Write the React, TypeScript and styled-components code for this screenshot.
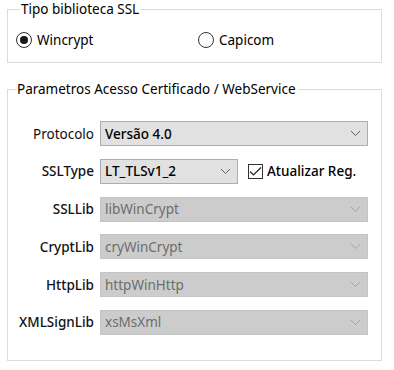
import React from "react";
import styled, { createGlobalStyle } from "styled-components";

const Global = createGlobalStyle`
  html, body { margin: 0; padding: 0; background: #ffffff; }
  body { font-family: "Segoe UI", "Noto Sans", "Open Sans", sans-serif; font-size: 14px; color: #000; }
`;

const Page = styled.div`
  width: 394px;
  height: 370px;
  box-sizing: border-box;
  padding: 1px 12px 0 7px;
  display: flex;
  flex-direction: column;
  gap: 18px;
`;

const Group = styled.fieldset<{ $h: number; $pt: number; $lm: number }>`
  margin: 0;
  box-sizing: border-box;
  height: ${(p) => p.$h}px;
  border: 1px solid #dcdcdc;
  padding: ${(p) => p.$pt}px 0 0 0;
  min-width: 0;
  & > legend {
    margin-left: ${(p) => p.$lm}px;
  }
`;

const Legend = styled.legend`
  padding: 0 2px 0 1px;
  font-size: 13.5px;
  line-height: 16px;
  color: #000;
`;

const RadioRow = styled.div`
  display: flex;
  align-items: center;
  padding-left: 8px;
`;

const RadioLabel = styled.label<{ $w: number }>`
  display: flex;
  align-items: center;
  gap: 5px;
  width: ${(p) => p.$w}px;
  font-size: 13.5px;
  line-height: 16px;
`;

const RadioCircle = styled.span<{ $on: boolean }>`
  width: 16px;
  height: 16px;
  box-sizing: border-box;
  border: 1px solid #333;
  border-radius: 50%;
  display: flex;
  align-items: center;
  justify-content: center;
  flex: none;
  &::after {
    content: "";
    width: 8px;
    height: 8px;
    border-radius: 50%;
    background: #1a1a1a;
    display: ${(p) => (p.$on ? "block" : "none")};
  }
`;

const Form = styled.div`
  display: grid;
  grid-template-columns: 86px 1fr;
  column-gap: 6px;
  row-gap: 12.8px;
  padding-right: 13px;
`;

const FieldLabel = styled.span<{ $light?: boolean }>`
  text-align: right;
  align-self: center;
  font-size: 13.5px;
  font-weight: ${(p) => (p.$light ? 400 : 500)};
  color: #111;
  white-space: nowrap;
`;

const Combo = styled.div<{ $disabled?: boolean; $w?: number }>`
  height: 25px;
  box-sizing: border-box;
  width: ${(p) => (p.$w ? `${p.$w}px` : "100%")};
  display: flex;
  align-items: center;
  justify-content: space-between;
  padding: 0 6px 0 4px;
  background: ${(p) => (p.$disabled ? "#cccccc" : "#e1e1e1")};
  border: 1px solid ${(p) => (p.$disabled ? "#c4c4c4" : "#adadad")};
  color: ${(p) => (p.$disabled ? "#6d6d6d" : "#000")};
  font-size: 13.5px;
  font-weight: ${(p) => (p.$disabled ? 400 : 500)};
`;

const Inline = styled.div`
  display: flex;
  align-items: center;
  gap: 10px;
`;

const CheckLabel = styled.label`
  display: flex;
  align-items: center;
  gap: 4px;
  font-size: 13.5px;
  font-weight: 500;
`;

const CheckBox = styled.span`
  width: 15px;
  height: 15px;
  box-sizing: border-box;
  border: 1px solid #333;
  display: flex;
  align-items: center;
  justify-content: center;
`;

const Chevron: React.FC<{ disabled?: boolean }> = ({ disabled }) => (
  <svg width="11" height="7" viewBox="0 0 11 7">
    <path
      d="M1 1 L5.5 5.5 L10 1"
      fill="none"
      stroke={disabled ? "#a6a6a6" : "#606060"}
      strokeWidth="1"
    />
  </svg>
);

const rows = [
  { label: "SSLLib", value: "libWinCrypt" },
  { label: "CryptLib", value: "cryWinCrypt" },
  { label: "HttpLib", value: "httpWinHttp" },
  { label: "XMLSignLib", value: "xsMsXml" },
];

export default function App() {
  return (
    <>
      <Global />
      <Page>
        <Group $h={62} $pt={15} $lm={12}>
          <Legend>Tipo biblioteca SSL</Legend>
          <RadioRow>
            <RadioLabel $w={182}>
              <RadioCircle $on />
              Wincrypt
            </RadioLabel>
            <RadioLabel $w={100}>
              <RadioCircle $on={false} />
              Capicom
            </RadioLabel>
          </RadioRow>
        </Group>
        <Group $h={280} $pt={24} $lm={8}>
          <Legend>Parametros Acesso Certificado / WebService</Legend>
          <Form>
            <FieldLabel $light>Protocolo</FieldLabel>
            <Combo>
              <span>Versão 4.0</span>
              <Chevron />
            </Combo>
            <FieldLabel>SSLType</FieldLabel>
            <Inline>
              <Combo $w={138}>
                <span>LT_TLSv1_2</span>
                <Chevron />
              </Combo>
              <CheckLabel>
                <CheckBox>
                  <svg width="13" height="11" viewBox="0 0 13 11">
                    <path d="M1 5.5 L4.5 9 L12 1.5" fill="none" stroke="#222" strokeWidth="1.2" />
                  </svg>
                </CheckBox>
                Atualizar Reg.
              </CheckLabel>
            </Inline>
            {rows.map((r) => (
              <React.Fragment key={r.label}>
                <FieldLabel>{r.label}</FieldLabel>
                <Combo $disabled>
                  <span>{r.value}</span>
                  <Chevron disabled />
                </Combo>
              </React.Fragment>
            ))}
          </Form>
        </Group>
      </Page>
    </>
  );
}
